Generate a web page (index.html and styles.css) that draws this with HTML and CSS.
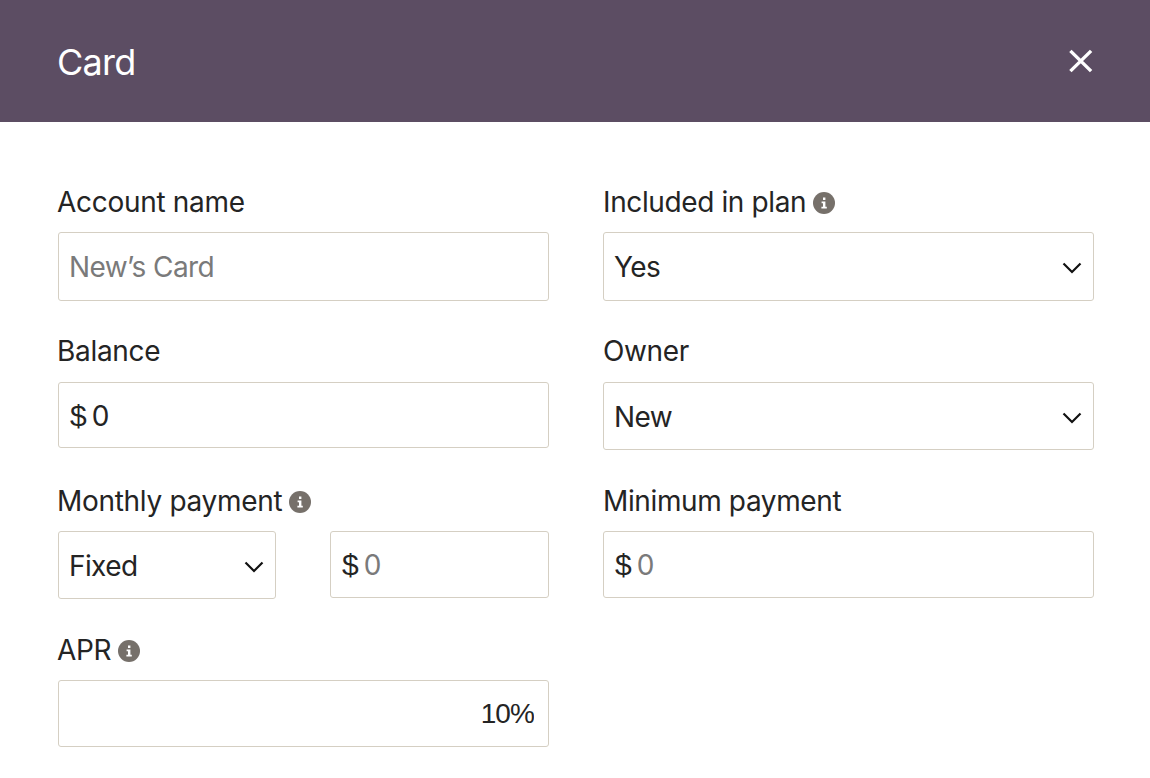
FILE: index.html
```html
<!DOCTYPE html>
<html lang="en">
<head>
<meta charset="utf-8">
<title>Card</title>
<link rel="stylesheet" href="styles.css">
</head>
<body>
<header class="modal-header">
  <h1 class="modal-title">Card</h1>
  <button class="close-btn" type="button" aria-label="Close">
    <svg viewBox="0 0 24 24" width="24" height="24"><path d="M1.4 1.9 22.1 22.1M22.1 1.9 1.4 22.1" fill="none" stroke="#fff" stroke-width="3.4"/></svg>
  </button>
</header>
<main class="form">
  <div class="field">
    <label class="label">Account name</label>
    <div class="box h69"><input class="control" type="text" placeholder="New’s Card"></div>
  </div>
  <div class="field">
    <label class="label">Included in plan
      <svg class="info" viewBox="0 0 22 22"><circle cx="11" cy="11" r="11" fill="#76706a"/><path d="M10 5.5h2.4v2.4H10zM8.6 9.5h3.8v5.2h1.4v1.8H8.4v-1.8h1.6v-3.4H8.6z" fill="#fff"/></svg>
    </label>
    <div class="box h69 select-box"><span class="value">Yes</span><svg class="chevron" viewBox="0 0 20 12"><path d="M1.5 1.5 10 10 18.5 1.5" fill="none" stroke="#111" stroke-width="2.2"/></svg></div>
  </div>
  <div class="field">
    <label class="label label-raised">Balance</label>
    <div class="box h66"><span class="prefix">$</span><input class="control filled" type="text" value="0"></div>
  </div>
  <div class="field">
    <label class="label label-raised">Owner</label>
    <div class="box h68 select-box"><span class="value">New</span><svg class="chevron" viewBox="0 0 20 12"><path d="M1.5 1.5 10 10 18.5 1.5" fill="none" stroke="#111" stroke-width="2.2"/></svg></div>
  </div>
  <div class="field">
    <label class="label">Monthly payment
      <svg class="info" viewBox="0 0 22 22"><circle cx="11" cy="11" r="11" fill="#76706a"/><path d="M10 5.5h2.4v2.4H10zM8.6 9.5h3.8v5.2h1.4v1.8H8.4v-1.8h1.6v-3.4H8.6z" fill="#fff"/></svg>
    </label>
    <div class="split">
      <div class="box h68 select-box"><span class="value">Fixed</span><svg class="chevron" viewBox="0 0 20 12"><path d="M1.5 1.5 10 10 18.5 1.5" fill="none" stroke="#111" stroke-width="2.2"/></svg></div>
      <div class="box h67"><span class="prefix">$</span><input class="control" type="text" placeholder="0"></div>
    </div>
  </div>
  <div class="field">
    <label class="label">Minimum payment</label>
    <div class="box h67"><span class="prefix">$</span><input class="control" type="text" placeholder="0"></div>
  </div>
  <div class="field">
    <label class="label">APR
      <svg class="info" viewBox="0 0 22 22"><circle cx="11" cy="11" r="11" fill="#76706a"/><path d="M10 5.5h2.4v2.4H10zM8.6 9.5h3.8v5.2h1.4v1.8H8.4v-1.8h1.6v-3.4H8.6z" fill="#fff"/></svg>
    </label>
    <div class="box h67"><input class="control filled apr" type="text" value="10%"></div>
  </div>
</main>
</body>
</html>
```
FILE: styles.css
```css
* { box-sizing: border-box; }
html, body { margin: 0; height: 100%; overflow: hidden; background: #fff; }
body { font-family: Inter, "Liberation Sans", sans-serif; color: #242424; }

.modal-header {
  height: 122px;
  background: #5c4d63;
  display: flex;
  align-items: center;
  justify-content: space-between;
  padding: 0 57px 0 57px;
}
.modal-title { margin: 2px 0 0; font-size: 36px; font-weight: 400; color: #fff; letter-spacing: -0.7px; }
.close-btn { border: 0; padding: 0; background: none; display: flex; }

.form {
  display: grid;
  grid-template-columns: 491px 491px;
  column-gap: 54px;
  row-gap: 36px;
  align-items: start;
  padding: 65px 0 0 58px;
}
.label {
  display: flex;
  align-items: center;
  gap: 7px;
  height: 30px;
  margin: 0 0 15px -1px;
  font-size: 28px;
  letter-spacing: -0.3px;
  white-space: nowrap;
}
.field:nth-child(even) .label { margin-left: 0; letter-spacing: -0.38px; }
.label-raised { height: 28px; margin-bottom: 17px; }
.info { width: 22px; height: 22px; margin-top: 2px; }

.split { display: grid; grid-template-columns: 218px 219px; column-gap: 54px; }

.box {
  display: flex;
  align-items: center;
  gap: 5px;
  padding: 1px 13px 0 10px;
  border: 1px solid #d5cfc3;
  border-radius: 3px;
  background: #fff;
  font-size: 28px;
}
.h66 { height: 66px; }
.h67 { height: 67px; }
.h68 { height: 68px; }
.h69 { height: 69px; }
.select-box { justify-content: space-between; padding-right: 11px; }
.value { color: #242424; letter-spacing: -0.6px; }
.prefix { margin-left: 1px; color: #242424; font-size: 30px; font-family: "Liberation Sans", sans-serif; }
.chevron { width: 20px; height: 12px; margin-top: 2px; }

.control {
  flex: 1;
  min-width: 0;
  border: 0;
  outline: 0;
  padding: 0;
  background: none;
  font: inherit;
  letter-spacing: -0.6px;
  color: #242424;
}
.control::placeholder { color: #7a7a7a; opacity: 1; }
.apr { padding-right: 1px; text-align: right; font-family: "Liberation Sans", sans-serif; font-size: 28px; letter-spacing: -0.9px; }
```
